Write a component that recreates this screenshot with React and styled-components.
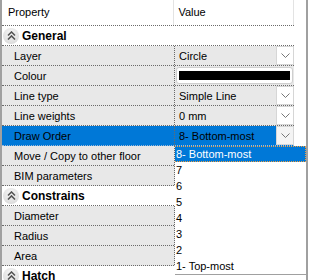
import React from "react";
import styled, { createGlobalStyle } from "styled-components";

const Global = createGlobalStyle`
  body {
    margin: 0;
    background: #fff;
    font-family: "Liberation Sans", Arial, sans-serif;
    font-size: 11px;
    color: #000;
  }
`;

const Frame = styled.div`
  position: relative;
  width: 308px;
  height: 280px;
  box-sizing: border-box;
  border-left: 2px solid #a0a0a0;
  border-right: 2px solid #a0a0a0;
  overflow: hidden;
`;

const Grid = styled.div`
  width: 292px;
`;

const HeaderRow = styled.div`
  display: flex;
  height: 26px;
  box-sizing: border-box;
  border-bottom: 1px dotted #6a6a6a;
`;

const HeaderCell = styled.div`
  width: ${(p) => p.$w}px;
  padding-left: ${(p) => p.$pad}px;
  box-sizing: border-box;
  border-right: 1px solid #e3e3e3;
  display: flex;
  align-items: center;
  padding-bottom: 1px;
`;

const Row = styled.div`
  display: flex;
  height: 20px;
  box-sizing: border-box;
  border-bottom: 1px dotted ${(p) => (p.$selected ? "#9ab8d8" : "#6a6a6a")};
  background: ${(p) => (p.$selected ? "#0078d7" : p.$category ? "#fff" : "#e8e8e8")};
`;

const NameCell = styled.div`
  width: 173px;
  box-sizing: border-box;
  padding-left: 12px;
  border-right: 1px dotted #6a6a6a;
  display: flex;
  align-items: center;
  white-space: nowrap;
`;

const ValueCell = styled.div`
  flex: 1;
  min-width: 0;
  padding-left: ${(p) => (p.$swatch ? 1 : 4)}px;
  display: flex;
  align-items: center;
`;

const ValueText = styled.span`
  flex: 1;
`;

const DropButton = styled.div`
  width: 18px;
  height: 19px;
  box-sizing: border-box;
  border: 1px solid #d6d6d6;
  background: ${(p) => (p.$selected ? "#f4f4f4" : "#fff")};
  display: flex;
  align-items: center;
  justify-content: center;
`;

const Swatch = styled.div`
  flex: 1;
  height: 17px;
  margin-right: 1px;
  box-sizing: border-box;
  border: 1px solid #cfcfcf;
  border-radius: 3px;
  background: #fff;
  padding: 3px 2px;
  display: flex;
`;

const SwatchFill = styled.div`
  flex: 1;
  background: #000;
`;

const CategoryCell = styled.div`
  display: flex;
  align-items: center;
  gap: 3px;
  padding-left: 1px;
  font-weight: bold;
  font-size: 12px;
`;

const ToggleIcon = styled.div`
  width: 16px;
  height: 16px;
  border-radius: 50%;
  background: radial-gradient(circle at 50% 35%, #f8f8f8 0%, #e2e2e2 60%, #cfcfcf 100%);
  display: flex;
  align-items: center;
  justify-content: center;
`;

const List = styled.div`
  position: absolute;
  left: 173px;
  top: 146px;
  width: 131px;
  background: #fff;
  border-bottom: 1px solid #a0a0a0;
`;

const ListItem = styled.div`
  height: 16px;
  box-sizing: border-box;
  padding-left: 1px;
  display: flex;
  align-items: center;
  color: ${(p) => (p.$active ? "#fff" : "#000")};
  background: ${(p) => (p.$active ? "#0078d7" : "#fff")};
  border: 1px dotted ${(p) => (p.$active ? "#f0a040" : "transparent")};
  border-left: none;
`;

const Chevron = () => (
  <svg width="9" height="5" viewBox="0 0 9 5">
    <polyline points="0.5,0.5 4.5,4.5 8.5,0.5" fill="none" stroke="#777" strokeWidth="1" />
  </svg>
);

const CollapseIcon = () => (
  <ToggleIcon>
    <svg width="9" height="9" viewBox="0 0 9 9">
      <polyline points="1,4.5 4.5,1 8,4.5" fill="none" stroke="#555" strokeWidth="1.6" />
      <polyline points="1,8.5 4.5,5 8,8.5" fill="none" stroke="#555" strokeWidth="1.6" />
    </svg>
  </ToggleIcon>
);

const sections = [
  {
    title: "General",
    items: [
      { name: "Layer", value: "Circle", drop: true },
      { name: "Colour", swatch: true },
      { name: "Line type", value: "Simple Line", drop: true },
      { name: "Line weights", value: "0 mm", drop: true },
      { name: "Draw Order", value: "8- Bottom-most", drop: true, selected: true },
      { name: "Move / Copy to other floor" },
      { name: "BIM parameters" },
    ],
  },
  {
    title: "Constrains",
    items: [{ name: "Diameter" }, { name: "Radius" }, { name: "Area" }],
  },
  { title: "Hatch", items: [] },
];

const options = ["8- Bottom-most", "7", "6", "5", "4", "3", "2", "1- Top-most"];

export default function App() {
  return (
    <>
      <Global />
      <Frame>
        <Grid>
          <HeaderRow>
            <HeaderCell $w={173} $pad={6}>Property</HeaderCell>
            <HeaderCell $w={120} $pad={4}>Value</HeaderCell>
          </HeaderRow>
          {sections.map((s) => (
            <React.Fragment key={s.title}>
              <Row $category>
                <CategoryCell>
                  <CollapseIcon />
                  {s.title}
                </CategoryCell>
              </Row>
              {s.items.map((it) => (
                <Row key={it.name} $selected={it.selected}>
                  <NameCell>{it.name}</NameCell>
                  <ValueCell $swatch={it.swatch}>
                    {it.swatch ? (
                      <Swatch>
                        <SwatchFill />
                      </Swatch>
                    ) : (
                      <ValueText>{it.value}</ValueText>
                    )}
                    {it.drop && (
                      <DropButton $selected={it.selected}>
                        <Chevron />
                      </DropButton>
                    )}
                  </ValueCell>
                </Row>
              ))}
            </React.Fragment>
          ))}
        </Grid>
        <List>
          {options.map((o, i) => (
            <ListItem key={o} $active={i === 0}>
              {o}
            </ListItem>
          ))}
        </List>
      </Frame>
    </>
  );
}
